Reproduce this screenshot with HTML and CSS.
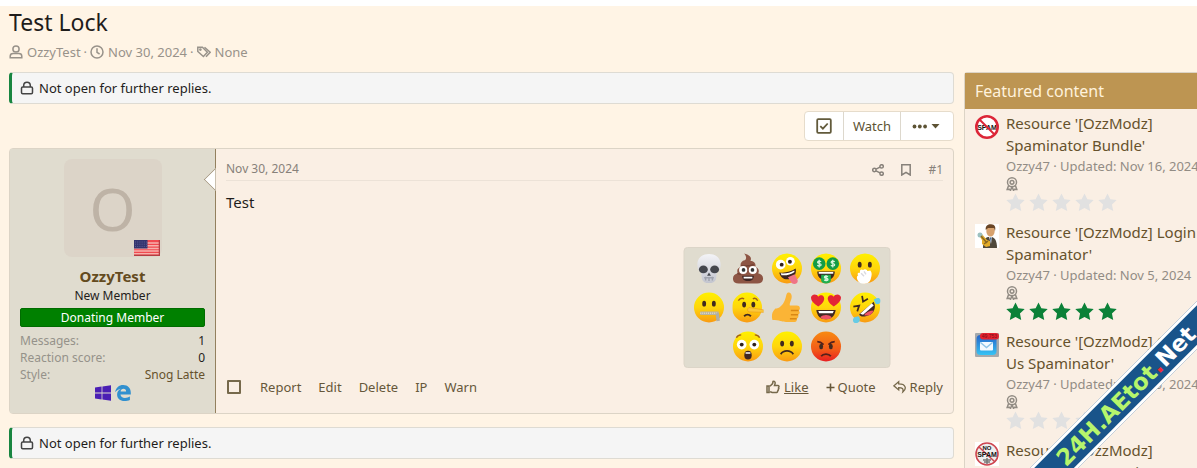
FILE: index.html
```html
<!DOCTYPE html>
<html lang="en">
<head>
<meta charset="utf-8">
<title>Test Lock</title>
<link rel="stylesheet" href="styles.css">
</head>
<body>
<svg class="defs" aria-hidden="true">
  <defs>
    <linearGradient id="yellow" x1="0" y1="0" x2="0" y2="1"><stop offset="0" stop-color="#fff000"/><stop offset=".5" stop-color="#ffd60c"/><stop offset="1" stop-color="#f99a12"/></linearGradient>
    <linearGradient id="red" x1="0" y1="0" x2="0" y2="1"><stop offset="0" stop-color="#f88a12"/><stop offset=".6" stop-color="#f25b18"/><stop offset="1" stop-color="#e81e22"/></linearGradient>
    <linearGradient id="bone" x1="0" y1="0" x2="0" y2="1"><stop offset="0" stop-color="#f4f4f7"/><stop offset="1" stop-color="#c3c5cf"/></linearGradient>
    <linearGradient id="sky" x1="0" y1="0" x2="0" y2="1"><stop offset="0" stop-color="#2563c8"/><stop offset="1" stop-color="#35c3f5"/></linearGradient>
    <symbol id="lock" viewBox="0 0 14 14"><rect x="1.5" y="6" width="11" height="6.7" rx="1.2"/><path d="M3.7 6V4.5a3.3 3.3 0 0 1 6.600 0V6"/></symbol>
    <symbol id="star" viewBox="0 0 20 20"><path d="M10 .5l3 6 6.700.9-5 4.700 1.300 6.800-6-3.200-6 3.200 1.300-6.800-5-4.700L7 6.500z"/></symbol>
    <symbol id="award" viewBox="0 0 12 14"><circle cx="6" cy="5.300" r="4.500"/><circle cx="6" cy="5.300" r="1.900"/><path d="M2.600 8.600L1.200 12.400l2.300-.2 1 1.200L6 10l1.500 3.400 1-1.200 2.300.2-1.400-3.800"/></symbol>
  </defs>
</svg>
<div class="page">
  <header class="heading">
    <h1>Test Lock</h1>
    <ul class="meta">
      <li><svg class="icon" viewBox="0 0 14 14"><circle cx="7" cy="4" r="3.1"/><path d="M1.2 12.800v-1.600c0-1.800 1.200-2.700 3-2.700h5.600c1.800 0 3 .9 3 2.700v1.600z"/></svg><a href="#">OzzyTest</a></li>
      <li><svg class="icon" viewBox="0 0 14 14"><circle cx="7" cy="7" r="6"/><path d="M7 3.200V7.400L9.600 9"/></svg><a href="#">Nov 30, 2024</a></li>
      <li><svg class="icon" viewBox="0 0 14 14"><path d="M.8 2.200h4.600l5 5-4 4.300-5.600-5z"/><path d="M7.500 2.200l5.700 5-4.200 4.500"/><circle cx="3.400" cy="4.600" r=".6"/></svg>None</li>
    </ul>
  </header>
  <div class="columns">
    <main class="main">
      <p class="notice"><svg><use href="#lock"/></svg>Not open for further replies.</p>
      <div class="actions">
        <div class="button-group">
          <button type="button" aria-label="Select for moderation"><svg class="check" viewBox="0 0 16 16"><rect x="1.200" y="1.200" width="13.600" height="13.600" rx="1"/><path d="M4.300 8.200l2.600 2.500 4.800-5.200"/></svg></button>
          <button type="button">Watch</button>
          <button type="button" aria-label="More options"><svg class="more" viewBox="0 0 28 8"><circle cx="2.500" cy="4.500" r="1.900"/><circle cx="7.800" cy="4.500" r="1.900"/><circle cx="13.100" cy="4.500" r="1.900"/><path d="M19.500 2h8l-4 4.500z"/></svg></button>
        </div>
      </div>
      <article class="message">
        <section class="user">
          <div class="avatar">O
            <svg class="flag" viewBox="0 0 26 16"><rect width="26" height="16" fill="#f04a50"/><path d="M0 3h26M0 5.700h26M0 8.400h26M0 11.100h26M0 13.800h26" stroke="#f6b1ac"/><rect width="13.500" height="8.500" fill="#34346e"/><path d="M1 2h12M1 4.200h12M1 6.400h12" stroke="#6668a0" stroke-width=".8" stroke-dasharray="1 1.200"/><path d="M0 15.500h26M25.500 0v16" stroke="#b43d42"/></svg>
          </div>
          <h2><a href="#">OzzyTest</a></h2>
          <p class="rank">New Member</p>
          <p class="banner">Donating Member</p>
          <dl class="stats">
            <div><dt>Messages:</dt><dd>1</dd></div>
            <div><dt>Reaction score:</dt><dd>0</dd></div>
            <div><dt>Style:</dt><dd><a href="#">Snog Latte</a></dd></div>
          </dl>
          <div class="platforms">
            <svg viewBox="0 0 16 16"><path fill="#4b1fb4" d="M0 2.400L6.600 1.500v6.100H0zM7.400 1.400L16 .2v7.400H7.400zM0 8.400h6.600v6.100L0 13.600zM7.400 8.400H16v7.400l-8.600-1.200z"/></svg>
            <svg viewBox="0 0 16 16"><path fill="#3190cf" d="M.2 7.300C.8 2.700 4 .1 8.200.1c4.700 0 7.600 3.300 7.600 7.600v1.700H5.500c.1 2.300 2 3.500 4.500 3.500 1.900 0 3.500-.5 4.900-1.300v3.300c-1.500.8-3.400 1.100-5.300 1.100-4.700 0-7.500-2.600-7.500-6.500 0-2.700 1.500-4.700 3.900-5.700C3.500 4.200 1.500 5.300.2 7.300zm5.400-.9h5.500c0-1.700-.9-2.700-2.600-2.700-1.600 0-2.700 1-2.900 2.700z"/></svg>
          </div>
        </section>
        <section class="content">
          <header class="post-head">
            <a href="#">Nov 30, 2024</a>
            <nav>
              <a href="#" aria-label="Share"><svg class="share" viewBox="0 0 12 12"><circle cx="2.400" cy="6" r="1.700"/><circle cx="9.600" cy="2.400" r="1.700"/><circle cx="9.600" cy="9.600" r="1.700"/><path d="M4 5.200l4-2M4 6.800l4 2"/></svg></a>
              <a href="#" aria-label="Bookmark"><svg class="bookmark" viewBox="0 0 10 12"><path d="M.8.8h8.400v10.200L5 8.300.8 11z"/></svg></a>
              <a href="#">#1</a>
            </nav>
          </header>
          <p class="text">Test</p>
          <footer class="post-foot">
            <input type="checkbox" aria-label="Select post">
            <a href="#">Report</a><a href="#">Edit</a><a href="#">Delete</a><a href="#">IP</a><a href="#">Warn</a>
            <div class="respond">
              <div class="like">
                <a href="#"><svg class="thumb" viewBox="0 0 14 14"><path d="M1 6h2v6.500H1zM4 6.200L6.600 3.600 7 1.400c1.700-.4 2.500.9 2 2.500l-.5 1.500h3.300c1.300 0 1.500 1.300.8 1.900.5.7.3 1.500-.3 1.900.2.800 0 1.400-.6 1.700 0 1.200-.7 1.700-2 1.700H7.200c-1.200 0-1.900-.5-3.200-1"/></svg><span>Like</span></a>
                <div class="reactions">
                  <svg viewBox="0 0 32 32" role="img" aria-label="Skull"><path fill="url(#bone)" d="M16 1c8 0 12.500 5 12 12-.2 4-1.500 5.500-4 7.500l-.7 6c-1 3.500-3.500 4.500-7.300 4.500s-6.300-1-7.300-4.500l-.7-6c-2.500-2-3.800-3.500-4-7.500C3.500 6 8 1 16 1z"/><ellipse cx="10.200" cy="17" rx="4.600" ry="4" fill="#45474e"/><ellipse cx="21.800" cy="17" rx="4.600" ry="4" fill="#45474e"/><path d="M16 20l-2 3.500h4z" fill="#45474e"/><path d="M11 25.500h10M12.500 24.500v4M16 25v4M19.500 24.500v4" stroke="#a0a3ae" fill="none"/></svg>
                  <svg viewBox="0 0 32 32" role="img" aria-label="Poop"><path fill="#8d5544" d="M12 .5c5 1 8.500 4 6.500 7.500 4 .3 6.200 3.500 5 6.500 3.500.7 4.500 4.500 3 6.500 3 1 5.500 2.600 5 6.200-.4 3-2.500 4.300-6 4.300H6.500C3 31.500.8 30 .5 27c-.3-3.400 2-5 5-6-1.500-3 0-6 3-6.500-1-4 1-6.300 4-7 2-.8 2.300-4-.5-7z"/><path d="M9 13c5 1 10 0 13-1M5 21c2 1 3 1 4 1" stroke="#714032" fill="none"/><circle cx="11" cy="17.500" r="4.200" fill="#fff"/><circle cx="21" cy="17.500" r="4.200" fill="#fff"/><circle cx="11.400" cy="17.500" r="1.900" fill="#333"/><circle cx="20.600" cy="17.500" r="1.900" fill="#333"/><path d="M10 23.500h12c0 3.500-2 5.500-6 5.500s-6-2-6-5.500z" fill="#3d2523"/><path d="M11.500 24.500h9v1.800h-9z" fill="#fff"/></svg>
                  <svg viewBox="0 0 32 32" role="img" aria-label="Zany"><circle cx="16" cy="16" r="15.500" fill="url(#yellow)"/><circle cx="9.500" cy="12" r="5" fill="#fff"/><circle cx="19.500" cy="8.500" r="4.500" fill="#fff"/><circle cx="10.500" cy="12" r="2" fill="#2f211c"/><circle cx="19" cy="9" r="2" fill="#2f211c"/><path d="M8 20c6 1 12-1 17-4 1 6-2 10-7 11-5 1-9-2-10-7z" fill="#3b2521"/><path d="M9.500 21c6 .5 10-1 14-3l.3 1.500c-4 2.500-8 4-13.500 3.500z" fill="#fff"/><path d="M17 25l7-3 3 6c1 4-5 5.500-7 2z" fill="#ef7486"/></svg>
                  <svg viewBox="0 0 32 32" role="img" aria-label="Money face"><circle cx="16" cy="16" r="15.500" fill="url(#yellow)"/><circle cx="9" cy="11" r="6.500" fill="#129c46"/><circle cx="23" cy="11" r="6.500" fill="#129c46"/><path d="M11 9c-1.500-1.200-4-.7-3.700.7.300 1.400 3.700.9 3.700 2.500 0 1.500-2.500 1.700-4 .5M9 7v8M25 9c-1.500-1.200-4-.7-3.700.7.300 1.400 3.700.9 3.700 2.500 0 1.500-2.500 1.700-4 .5M23 7v8" stroke="#d9f5dc" stroke-width="1.200" fill="none"/><path d="M7 19h18c0 5-3 9-9 9s-9-4-9-9z" fill="#3b2521"/><path d="M8.500 19.500h15v2h-15z" fill="#fff"/><path d="M11 22.500h10v6c0 4-10 4-10 0z" fill="#20ae50"/><path d="M18 24.500c-1.500-1-3.700-.5-3.500.6.200 1.200 3.500.8 3.500 2.200 0 1.300-2.500 1.500-3.800.5M16 23v6" stroke="#d9f5dc" fill="none"/></svg>
                  <svg viewBox="0 0 32 32" role="img" aria-label="Hand over mouth"><circle cx="16" cy="16" r="15.500" fill="url(#yellow)"/><ellipse cx="10.500" cy="12" rx="2" ry="3" fill="#402a20"/><ellipse cx="21" cy="12" rx="2" ry="3" fill="#402a20"/><path d="M9 23c-1.500-2 0-3 2-2.500-1-3 1-4.500 3-3 2-1.500 4-.5 4.500 1l3-.5c2 2.500 1.500 5 .5 8.500C20.500 33 11 33.500 8.500 28.500 7 26 7.500 24 9 23z" fill="#fff"/><path d="M12 21l3 3M15 19l2 3" stroke="#d9d9df" fill="none"/></svg>
                  <svg viewBox="0 0 32 32" role="img" aria-label="Zipped"><circle cx="16" cy="16" r="15.500" fill="url(#yellow)"/><ellipse cx="11" cy="12" rx="2" ry="3" fill="#402a20"/><ellipse cx="21" cy="12" rx="2" ry="3" fill="#402a20"/><path d="M7 22h19" stroke="#b9b4a0" stroke-width="3.500"/><path d="M7 22h18" stroke="#dcd8cb" stroke-dasharray="1 1"/><path d="M24.500 22l1 8" stroke="#b0aea6" stroke-width="3.500"/></svg>
                  <svg viewBox="0 0 32 32" role="img" aria-label="Lying"><circle cx="15" cy="16" r="15.500" fill="url(#yellow)"/><ellipse cx="12" cy="13" rx="2" ry="3" fill="#402a20"/><ellipse cx="21.500" cy="13" rx="2" ry="3" fill="#402a20"/><path d="M6 9c2-3 4-3 6-2M21 7c2-1 4 0 5 2" stroke="#a36216" fill="none"/><path d="M17 16l15.500 2.500v2.500l-15.500-.5c-2-1-2-3 0-4.500z" fill="#fbc83c" stroke="#eda01d" stroke-width=".7"/><path d="M12 25c2-2 5-2 7 0" stroke="#402a20" stroke-width="2" fill="none"/></svg>
                  <svg viewBox="0 0 32 32" role="img" aria-label="Like"><path fill="#fbb436" d="M4 17c4 0 7-3 9-7 2-3 2-9 4-9.500 4-.7 5 4.500 2.500 9.500-.8 2-.8 3-.5 4h7c4 0 4 4 2 5 2 2 1 4-.6 4.500 1 2 0 3.500-1.400 4 .6 2-.5 3.500-3 3.500h-8c-4 0-7-2-14-2-1-4-1-8 3-12z"/><path d="M20 19h8M20 23.500h7.500M19 27.700h7" stroke="#d98715" fill="none"/></svg>
                  <svg viewBox="0 0 32 32" role="img" aria-label="Love"><circle cx="16" cy="16" r="15.500" fill="url(#yellow)"/><path fill="#e32636" d="M8 15C3 12 .5 9 .5 6c0-4 6-5 7.500-1 3-3.500 7-.5 6 3-.7 3-3 5-6 7zM24 15c5-3 7.500-6 7.500-9 0-4-6-5-7.500-1-3-3.500-7-.5-6 3 .7 3 3 5 6 7z"/><path d="M6 18.500h20c-1 6-4 9.500-10 9.500S7 25 6 18.500z" fill="#412723"/><path d="M8 19.500h16l-1 2.500H9z" fill="#fff"/><path d="M10 26c3-3 9-3 12 0-3 3-9 3-12 0z" fill="#ed5165"/></svg>
                  <svg viewBox="0 0 32 32" role="img" aria-label="Rolling laugh"><circle cx="16" cy="16" r="15.500" fill="url(#yellow)"/><path d="M13 4l1 6 5-3M4 15l6-1-2 6" stroke="#402a20" stroke-width="1.800" fill="none"/><path d="M25 10c3 6 0 12-5 14s-9 2-10-1z" fill="#412723"/><path d="M23 11.500l2 2.500-11 9.500-3-1z" fill="#fff"/><path d="M15 24c2-3 6-5 10-5-2 5-6 6-10 5z" fill="#ed5165"/><path d="M25 8c2-2 6-3 7 0s-2 6-5 4zM9 25c2 1 3 6-1 7s-6-3-3-6z" fill="#67cbe5"/></svg>
                  <svg viewBox="0 0 32 32" role="img" aria-label="Wow"><circle cx="16" cy="16" r="15.500" fill="url(#yellow)"/><circle cx="9.500" cy="14" r="5" fill="#fff"/><circle cx="22.500" cy="14" r="5" fill="#fff"/><circle cx="9.500" cy="14" r="2" fill="#2f211c"/><circle cx="22.500" cy="14" r="2" fill="#2f211c"/><path d="M4 7c1-2 3-3 5-3M23 4c2 0 4 1 5 3" stroke="#a36216" fill="none"/><ellipse cx="16" cy="25" rx="3.800" ry="4.500" fill="#412723"/><path d="M13.500 22h5v1.500h-5z" fill="#fff"/></svg>
                  <svg viewBox="0 0 32 32" role="img" aria-label="Sad"><circle cx="16" cy="16" r="15.500" fill="url(#yellow)"/><ellipse cx="11" cy="13" rx="2" ry="3" fill="#402a20"/><ellipse cx="21" cy="13" rx="2" ry="3" fill="#402a20"/><path d="M9.500 24c3-4.500 10-4.500 13 0" stroke="#402a20" stroke-width="1.800" fill="none"/></svg>
                  <svg viewBox="0 0 32 32" role="img" aria-label="Angry"><circle cx="16" cy="16" r="15.500" fill="url(#red)"/><ellipse cx="11" cy="16" rx="2" ry="2.800" fill="#402a20"/><ellipse cx="21" cy="16" rx="2" ry="2.800" fill="#402a20"/><path d="M7 11c3 0 5 1.500 6.500 3M25 11c-3 0-5 1.500-6.500 3M11 26c2-3 8-3 10 0" stroke="#56211a" stroke-width="1.800" fill="none"/></svg>
                </div>
              </div>
              <a href="#"><svg class="plus" viewBox="0 0 9 9"><path d="M4.500.5v8M.5 4.500h8"/></svg>Quote</a>
              <a href="#"><svg class="reply" viewBox="0 0 16 14"><path d="M6.500 1L1 5.700l5.500 4.600V7.800c4 0 5.800 1 4.700 5 4.500-3.500 4-9.300-4.700-9.300z"/></svg>Reply</a>
            </div>
          </footer>
        </section>
      </article>
      <p class="notice"><svg><use href="#lock"/></svg>Not open for further replies.</p>
    </main>
    <aside class="featured">
      <h2>Featured content</h2>
      <ul>
        <li>
          <svg class="thumbnail" viewBox="0 0 24 24"><circle cx="12" cy="12" r="12" fill="#fff"/><text x="12" y="15" font-size="7" text-anchor="middle" class="stamp">SPAM</text><circle cx="12" cy="12" r="10.700" fill="none" stroke="#dc2637" stroke-width="2.600"/><path d="M4.500 4.500l15 15" stroke="#dc2637" stroke-width="2"/></svg>
          <div class="item"><a href="#">Resource '[OzzModz] Spaminator Bundle'</a><p>Ozzy47 · Updated: Nov 16, 2024</p><svg class="award"><use href="#award"/></svg>
          <div class="stars" role="img" aria-label="0 stars"><svg><use href="#star"/></svg><svg><use href="#star"/></svg><svg><use href="#star"/></svg><svg><use href="#star"/></svg><svg><use href="#star"/></svg></div></div>
        </li>
        <li>
          <svg class="thumbnail" viewBox="0 0 24 24"><rect width="24" height="24" fill="#fff"/><path d="M8 24c0-6 1-10 5-11h4c3 1 5 4 5 11z" fill="#50493c"/><path d="M14 13h3l-1 7z" fill="#eee"/><path d="M15 13.500h1.500L16 19z" fill="#28548a"/><ellipse cx="15.500" cy="7" rx="4.200" ry="5.500" fill="#d7a26e"/><path d="M10.800 6C10 1 14 0 16 .3c4 0 5 3 4 6.700l-1-3h-6z" fill="#6a4525"/><path d="M3 10l3-1 6 7 3 1v5l-4 1-4-3v-4z" fill="#e3ac28"/><circle cx="5" cy="11" r="2.500" fill="#9cc0c0"/><path d="M6 12l6 7M9 20l4-3" stroke="#8b6822"/></svg>
          <div class="item"><a href="#">Resource '[OzzModz] Login Spaminator'</a><p>Ozzy47 · Updated: Nov 5, 2024</p><svg class="award"><use href="#award"/></svg>
          <div class="stars rated" role="img" aria-label="5 stars"><svg><use href="#star"/></svg><svg><use href="#star"/></svg><svg><use href="#star"/></svg><svg><use href="#star"/></svg><svg><use href="#star"/></svg></div></div>
        </li>
        <li>
          <svg class="thumbnail" viewBox="0 0 24 24"><rect width="24" height="24" rx="1" fill="#a5a9ac"/><rect x="1.500" y="2" width="20" height="20" rx="4" fill="url(#sky)"/><rect x="5" y="9" width="13" height="8.500" rx="1" fill="#f3faff"/><path d="M5.500 9.500l6 5 6-5" fill="none" stroke="#8fc5e8"/><rect x="5" y="0" width="19" height="6.500" rx="3.200" fill="#e5202e"/><text x="14.500" y="5" font-size="5" text-anchor="middle" class="count">49,753</text></svg>
          <div class="item"><a href="#">Resource '[OzzModz] Contact Us Spaminator'</a><p>Ozzy47 · Updated: Nov 15, 2024</p><svg class="award"><use href="#award"/></svg>
          <div class="stars" role="img" aria-label="0 stars"><svg><use href="#star"/></svg><svg><use href="#star"/></svg><svg><use href="#star"/></svg><svg><use href="#star"/></svg><svg><use href="#star"/></svg></div></div>
        </li>
        <li>
          <svg class="thumbnail" viewBox="0 0 24 24"><rect width="24" height="24" fill="#fff"/><circle cx="12" cy="12" r="11" fill="#eee" stroke="#ce4650" stroke-width="1.600"/><path d="M4 5l16 15" stroke="#ce4650" stroke-width="1.500"/><path d="M8 18h8M9 20h6M12 16v6" stroke="#777"/><text x="12" y="7.500" font-size="6" text-anchor="middle" class="stamp">NO</text><text x="12" y="14.500" font-size="7" text-anchor="middle" class="stamp">SPAM</text></svg>
          <div class="item"><a href="#">Resource '[OzzModz] Registration Spaminator'</a></div>
        </li>
      </ul>
    </aside>
  </div>
  <div class="ribbon"><span>24H.AEtot<b>.</b><i>Net</i></span></div>
</div>
</body>
</html>
```
FILE: styles.css
```css
* { box-sizing: border-box; }
body { margin: 0; background: #fff4e5; color: #1f1d1b; font: 13px/18px "Noto Sans", "Open Sans", sans-serif; }
h1, h2, p, ul, dl, dd { margin: 0; padding: 0; font-weight: 400; }
ul { list-style: none; }
a { color: inherit; text-decoration: none; }
svg { display: block; flex: none; fill: none; stroke-width: 1.5; }
.defs { position: absolute; width: 0; height: 0; }
.page { position: relative; height: 100vh; overflow: hidden; padding-left: 9px; border-top: 6px solid #fff; }

.heading { height: 66px; }
.heading h1 { font-size: 23px; line-height: 32px; }
.meta { display: flex; padding-top: 5px; color: #98928a; }
.meta li { display: flex; align-items: center; gap: 4px; }
.meta li + li::before { content: "·"; margin-left: 3px; margin-right: -1px; }
.icon { width: 14px; height: 14px; stroke: #98928a; }

.columns { display: flex; align-items: flex-start; gap: 10px; margin-right: -17px; }
.main { flex: 1; min-width: 0; }
.notice { display: flex; align-items: center; gap: 5px; height: 32px; padding-left: 8px; background: #f5f5f5; border: 1px solid #dedbd3; border-left: 3px solid #188541; border-radius: 4px; }
.notice svg { width: 14px; height: 14px; stroke: #444; stroke-width: 1.5; }
.actions { display: flex; justify-content: flex-end; padding: 7px 0; }
.button-group { display: flex; height: 30px; background: #fff; border: 1px solid #e6dccb; border-radius: 4px; }
.button-group button { display: flex; align-items: center; padding: 0 11px; border: 0; background: none; color: #5d5334; font: inherit; }
.button-group button + button { border-left: 1px solid #ddd8cd; padding: 0 9px; }
.button-group button:last-child { padding: 0 13px 0 11px; }
.check { width: 16px; height: 16px; stroke: #625a3b; stroke-width: 1.8; }
.more { width: 28px; height: 8px; fill: #5d5334; }

.message { display: flex; min-height: 266px; margin-bottom: 13px; background: #faefe4; border: 1px solid #dcd4c6; border-radius: 4px; }
.user { position: relative; width: 206px; padding: 10px; background: #e0dccf; border-right: 1px solid #93805e; text-align: center; font-size: 12px; line-height: 17px; }
.user::after { content: ""; position: absolute; top: 22px; right: -9px; width: 15px; height: 15px; background: #fff; border: 1px solid #a3957c; transform: rotate(45deg); clip-path: polygon(0 0, 0 100%, 100% 100%); }
.avatar { position: relative; width: 98px; height: 98px; margin: 0 auto 9px; background: #dcd4c8; border-radius: 8px; color: #beb3a6; font-size: 59px; line-height: 98px; }
.flag { position: absolute; right: 2px; bottom: 1px; width: 26px; height: 16px; }
.user h2 { font-size: 15px; line-height: 20px; }
.user h2 a { font-weight: 700; color: #644b20; }
.rank { line-height: 20px; }
.banner { margin: 2px 0 5px; background: #008000; border: 1px solid #006c00; border-radius: 2px; color: #fff; }
.stats div { display: flex; justify-content: space-between; }
.stats dt { color: #95928a; }
.stats a { color: #66522c; }
.platforms { display: flex; justify-content: center; gap: 4px; padding-top: 2px; }
.platforms svg { width: 16px; height: 16px; }

.content { display: flex; flex: 1; flex-direction: column; padding: 11px 10px 17px; }
.post-head { display: flex; justify-content: space-between; height: 21px; border-bottom: 1px solid #ece2d7; color: #87817a; font-size: 12px; }
.post-head nav { display: flex; align-items: center; gap: 17px; }
.share { width: 12px; height: 12px; stroke: #87817a; }
.bookmark { width: 10px; height: 12px; stroke: #87817a; }
.text { padding-top: 11px; font-size: 15px; line-height: 20px; }
.post-foot { display: flex; align-items: center; gap: 17px; margin-top: auto; color: #66573a; }
.post-foot input { appearance: none; width: 14px; height: 14px; margin: 0 2px 0 1px; border: 2px solid #76694b; border-radius: 1px; }
.respond { display: flex; gap: 17px; margin-left: auto; }
.respond a { display: flex; align-items: center; gap: 4px; }
.respond .like span { text-decoration: underline; }
.like { position: relative; }
.thumb { width: 14px; height: 14px; stroke: #76694b; }
.respond .plus { width: 9px; height: 9px; margin-right: -1px; stroke: #66573a; stroke-width: 1.6; }
.reply { width: 14px; height: 14px; margin-right: -1px; stroke: #76694b; }
.reactions { position: absolute; bottom: 28px; left: 50%; display: flex; flex-wrap: wrap; justify-content: center; width: 207px; padding: 1px 5px; background: #e0dccf; border: 1px solid #dcd5c8; border-radius: 4px; transform: translateX(-50%); }
.reactions svg { width: 39px; height: 39px; padding: 4px; }

.featured { width: 250px; background: #faefe4; border: 1px solid #dcd4c6; border-radius: 3px; }
.featured h2 { padding: 0 10px; background: #bd9552; color: #fff2dc; font-size: 16px; line-height: 36px; }
.featured li { display: flex; gap: 7px; min-height: 109px; padding: 3px 0 4px 10px; }
.thumbnail { width: 24px; height: 24px; margin-top: 3px; }
.stamp { fill: #171313; font-family: "Liberation Sans", sans-serif; font-weight: 700; }
.count { fill: #7a1018; font-family: "Liberation Sans", sans-serif; }
.item { flex: 1; min-width: 0; }
.item a { display: block; color: #66522c; font-size: 15px; line-height: 22px; }
.item p { padding-top: 1px; color: #928c84; white-space: nowrap; }
.award { width: 12px; height: 14px; margin: 2px 0; stroke: #928c84; }
.stars { display: flex; gap: 4px; color: #e1e1e1; }
.stars svg { width: 19px; height: 19px; fill: currentColor; }
.stars.rated { color: #0b8138; }

.ribbon { position: absolute; right: -109px; bottom: 55px; display: flex; justify-content: center; width: 360px; background: #19548a; border: 2px solid #fff; border-width: 3px 0; color: #b6f56c; font: 700 23px/28px "DejaVu Sans", sans-serif; transform: rotate(-45deg); }
.ribbon b { color: #ee2a3a; }
.ribbon i { color: #fff; font-style: normal; }
```
